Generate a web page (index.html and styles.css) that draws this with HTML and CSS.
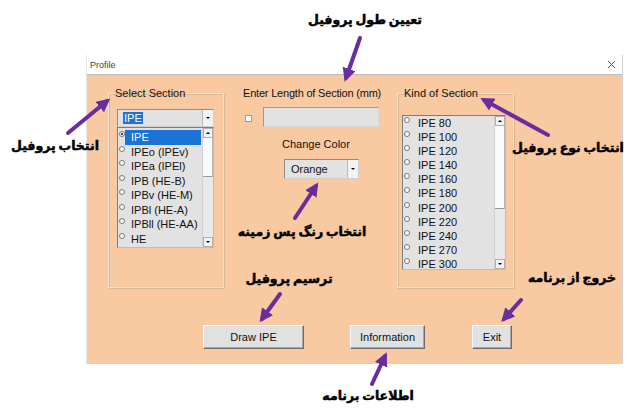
FILE: index.html
```html
<!DOCTYPE html>
<html lang="en">
<head>
  <meta charset="UTF-8">
  <meta name="viewport" content="width=device-width, initial-scale=1.0">
  <title>Profile</title>
  <link rel="stylesheet" href="styles.css">
</head>
<body>
  <div class="window">
    <div class="titlebar">
      <span class="title">Profile</span>
      <svg class="close" width="9" height="9" viewBox="0 0 9 9"><path d="M1 1L8 8M8 1L1 8" stroke="#555" stroke-width="1"/></svg>
    </div>
    <div class="form">
      <div class="top-row">
        <fieldset class="group group-select">
          <legend>Select Section</legend>
          <div class="combo combo-type">
            <span class="combo-text"><span class="picked">IPE</span></span>
            <span class="drop"><i></i></span>
          </div>
          <div class="listbox list-type">
            <ul>
              <li class="on"><span class="radio"></span><span class="item">IPE</span></li>
              <li><span class="radio"></span><span class="item">IPEo (IPEv)</span></li>
              <li><span class="radio"></span><span class="item">IPEa (IPEl)</span></li>
              <li><span class="radio"></span><span class="item">IPB (HE-B)</span></li>
              <li><span class="radio"></span><span class="item">IPBv (HE-M)</span></li>
              <li><span class="radio"></span><span class="item">IPBl (HE-A)</span></li>
              <li><span class="radio"></span><span class="item">IPBll (HE-AA)</span></li>
              <li><span class="radio"></span><span class="item">HE</span></li>
            </ul>
            <div class="scroll scroll-type">
              <span class="arrow up"></span>
              <span class="thumb"></span>
              <span class="track"></span>
              <span class="arrow down"></span>
            </div>
          </div>
        </fieldset>

        <div class="middle">
          <div class="caption length-caption">Enter Length of Section (mm)</div>
          <div class="length-row">
            <span class="check"></span>
            <span class="textbox"></span>
          </div>
          <div class="caption color-caption">Change Color</div>
          <div class="combo combo-color">
            <span class="combo-text">Orange</span>
            <span class="drop"><i></i></span>
          </div>
        </div>

        <fieldset class="group group-kind">
          <legend>Kind of Section</legend>
          <div class="listbox list-kind">
            <ul>
              <li><span class="radio"></span><span class="item">IPE 80</span></li>
              <li><span class="radio"></span><span class="item">IPE 100</span></li>
              <li><span class="radio"></span><span class="item">IPE 120</span></li>
              <li><span class="radio"></span><span class="item">IPE 140</span></li>
              <li><span class="radio"></span><span class="item">IPE 160</span></li>
              <li><span class="radio"></span><span class="item">IPE 180</span></li>
              <li><span class="radio"></span><span class="item">IPE 200</span></li>
              <li><span class="radio"></span><span class="item">IPE 220</span></li>
              <li><span class="radio"></span><span class="item">IPE 240</span></li>
              <li><span class="radio"></span><span class="item">IPE 270</span></li>
              <li><span class="radio"></span><span class="item">IPE 300</span></li>
            </ul>
            <div class="scroll scroll-kind">
              <span class="arrow up"></span>
              <span class="thumb"></span>
              <span class="track"></span>
              <span class="arrow down"></span>
            </div>
          </div>
        </fieldset>
      </div>

      <div class="buttons">
        <button class="btn btn-draw">Draw IPE</button>
        <button class="btn btn-info">Information</button>
        <button class="btn btn-exit">Exit</button>
      </div>
    </div>
  </div>

  <!-- callouts drawn over the dialog -->
  <svg class="arrows" width="640" height="419" viewBox="0 0 640 419">
    <defs>
      <marker id="head" viewBox="0 0 10 10" refX="7" refY="5" markerWidth="3.4" markerHeight="3.4" orient="auto">
        <path d="M0 0L10 5L0 10z" fill="#6a2d9c"/>
      </marker>
    </defs>
    <g stroke="#6a2d9c" stroke-width="4" stroke-linecap="round" marker-end="url(#head)">
      <line x1="360" y1="38" x2="346" y2="78"/>
      <line x1="68" y1="133" x2="107" y2="101"/>
      <line x1="548" y1="135" x2="484" y2="100"/>
      <line x1="295" y1="218" x2="316" y2="186"/>
      <line x1="280" y1="294" x2="262" y2="319"/>
      <line x1="521" y1="300" x2="504" y2="319"/>
      <line x1="372" y1="384" x2="385" y2="356"/>
    </g>
  </svg>

  <span class="note note-length" dir="rtl">تعیین طول پروفیل</span>
  <span class="note note-select" dir="rtl">انتخاب پروفیل</span>
  <span class="note note-kind" dir="rtl">انتخاب نوع پروفیل</span>
  <span class="note note-color" dir="rtl">انتخاب رنگ پس زمینه</span>
  <span class="note note-draw" dir="rtl">ترسیم پروفیل</span>
  <span class="note note-exit" dir="rtl">خروج از برنامه</span>
  <span class="note note-info" dir="rtl">اطلاعات برنامه</span>
</body>
</html>
```

FILE: styles.css
```css
body {
  margin: 0;
  width: 640px;
  height: 419px;
  background: #fff;
  position: relative;
  overflow: hidden;
  font-family: 'Liberation Sans', Arial, sans-serif;
  color: #111;
}
.window {
  margin: 55px 0 0 86px;
  width: 535px;
  border-left: 1px solid #e4e4e4;
  border-right: 1px solid #d2d2d2;
}
.titlebar {
  height: 19px;
  display: flex;
  align-items: center;
  justify-content: space-between;
  padding: 0 6px 0 3px;
  border-bottom: 1px solid #bdbdbd;
  font-size: 9px;
  color: #444;
}
.form {
  height: 289px;
  background: #f9c9a1;
}
.top-row {
  display: flex;
  padding: 11px 0 0 21px;
}
.group {
  margin: 0;
  height: 202px;
  box-sizing: border-box;
  border: 1px solid #ece3da;
  box-shadow: inset 1px 1px 0 #d9b898, 1px 1px 0 #d9b898;
  padding: 0 8px;
}
.group legend {
  font-size: 11px;
  line-height: 14px;
  padding: 0 1px;
  margin-left: -3px;
}
.group-select {
  width: 116px;
}
.group-kind {
  width: 117px;
  margin-left: 17px;
  padding: 0 4px;
}
.group-kind legend {
  margin-left: 1px;
}

/* combo boxes */
.combo {
  display: flex;
  box-sizing: border-box;
  border: 1px solid #8c8c8c;
  border-right-color: #cfcfcf;
  border-bottom-color: #cfcfcf;
  background: #e2e2e2;
  font-size: 11px;
}
.combo-text {
  flex: 1;
  display: flex;
  align-items: center;
}
.drop {
  width: 10px;
  background: #f2f2f2;
  border-left: 1px solid #b8b8b8;
  display: flex;
  align-items: center;
  justify-content: center;
}
.drop i {
  width: 0;
  height: 0;
  border-left: 2px solid transparent;
  border-right: 2px solid transparent;
  border-top: 2px solid #000;
}
.combo-type {
  margin-top: 9px;
  width: 97px;
  height: 18px;
}
.combo-type .combo-text {
  padding-left: 5px;
}
.picked {
  background: #1b73d6;
  color: #fff;
  padding: 0 1px;
  line-height: 12px;
}

/* list boxes */
.listbox {
  display: flex;
  box-sizing: border-box;
  border: 1px solid #7d7d7d;
  border-right-color: #bdbdbd;
  border-bottom-color: #bdbdbd;
  background: #e2e2e2;
  font-size: 11px;
  overflow: hidden;
}
.listbox ul {
  list-style: none;
  margin: 0;
  padding: 0;
  flex: 1;
}
.listbox li {
  display: flex;
  align-items: flex-start;
}
.radio {
  width: 4px;
  height: 4px;
  border: 1px solid #777;
  border-radius: 50%;
  background: #fff;
  margin: 1px 0 0 1px;
  flex: none;
}
.item {
  flex: 1;
  white-space: nowrap;
}
.list-type {
  width: 97px;
  height: 121px;
}
.list-type ul {
  padding-top: 2px;
}
.list-type li {
  height: 14.5px;
  line-height: 14.5px;
}
.list-type .item {
  padding-left: 6px;
}
.list-type li.on .item {
  background: #1b73d6;
  color: #fff;
  margin-right: 1px;
}
.list-type li.on .radio {
  background: radial-gradient(circle, #444 35%, #fff 45%);
}
.list-kind {
  width: 104px;
  height: 155px;
  margin-top: 15px;
}
.list-kind li {
  height: 14.1px;
  line-height: 14.1px;
}
.list-kind .item {
  padding-left: 8px;
}

/* scroll bars */
.scroll {
  width: 10px;
  display: flex;
  flex-direction: column;
  background: #e9e9e9;
  border-left: 1px solid #d0d0d0;
}
.scroll .arrow {
  height: 10px;
  background: #f3f3f3;
  border: 1px solid #b0b0b0;
  box-sizing: border-box;
  display: flex;
  align-items: center;
  justify-content: center;
}
.scroll .arrow::after {
  content: "";
  border-left: 2px solid transparent;
  border-right: 2px solid transparent;
}
.scroll .up::after {
  border-bottom: 2px solid #000;
}
.scroll .down::after {
  border-top: 2px solid #000;
}
.scroll .thumb {
  background: #fafafa;
  border-bottom: 1px solid #9a9a9a;
  border-right: 1px solid #b5b5b5;
}
.scroll .track {
  flex: 1;
}
.scroll-type .thumb {
  height: 38px;
}
.scroll-kind .thumb {
  height: 82px;
}

/* middle column */
.middle {
  width: 137px;
  margin-left: 19px;
}
.caption {
  font-size: 11px;
  line-height: 14px;
  white-space: nowrap;
}
.length-caption {
  letter-spacing: -0.2px;
}
.length-row {
  display: flex;
  align-items: center;
  margin-top: 7px;
}
.check {
  width: 5px;
  height: 5px;
  border: 1px solid #9a9a9a;
  background: #fff;
  margin: 3px 0 0 2px;
}
.textbox {
  width: 116px;
  height: 20px;
  box-sizing: border-box;
  margin-left: 11px;
  background: #e2e2e2;
  border: 1px solid #9a9a9a;
  border-right-color: #d8d8d8;
  border-bottom-color: #d8d8d8;
}
.color-caption {
  margin: 10px 0 0 39px;
}
.combo-color {
  margin: 8px 0 0 41px;
  width: 75px;
  height: 20px;
}
.combo-color .combo-text {
  padding-left: 6px;
}

/* command buttons */
.buttons {
  display: flex;
  padding-left: 116px;
  margin-top: 37px;
}
.btn {
  height: 24px;
  box-sizing: border-box;
  font-family: 'Liberation Sans', Arial, sans-serif;
  font-size: 11px;
  color: #111;
  background: #e1e1e1;
  border: 1px solid;
  border-color: #fafafa #6d6d6d #6d6d6d #fafafa;
  box-shadow: inset -1px -1px 0 #a8a8a8;
  padding: 0;
}
.btn-draw {
  width: 101px;
}
.btn-info {
  width: 75px;
  margin-left: 46px;
}
.btn-exit {
  width: 40px;
  margin-left: 47px;
}

/* callouts */
.arrows {
  position: absolute;
  left: 0;
  top: 0;
  pointer-events: none;
}
.note {
  position: absolute;
  width: 160px;
  margin: -11px 0 0 -80px;
  line-height: 22px;
  text-align: center;
  font-family: 'DejaVu Sans', sans-serif;
  font-weight: bold;
  font-size: 12.5px;
  word-spacing: -1.5px;
  -webkit-text-stroke: 0.5px #000;
  color: #000;
  white-space: nowrap;
}
.note-length { left: 365px; top: 20px; }
.note-select { left: 55px; top: 146px; }
.note-kind { left: 568px; top: 148px; }
.note-color { left: 302px; top: 232px; }
.note-draw { left: 289px; top: 279px; }
.note-exit { left: 572px; top: 278px; }
.note-info { left: 368px; top: 396px; }
```
